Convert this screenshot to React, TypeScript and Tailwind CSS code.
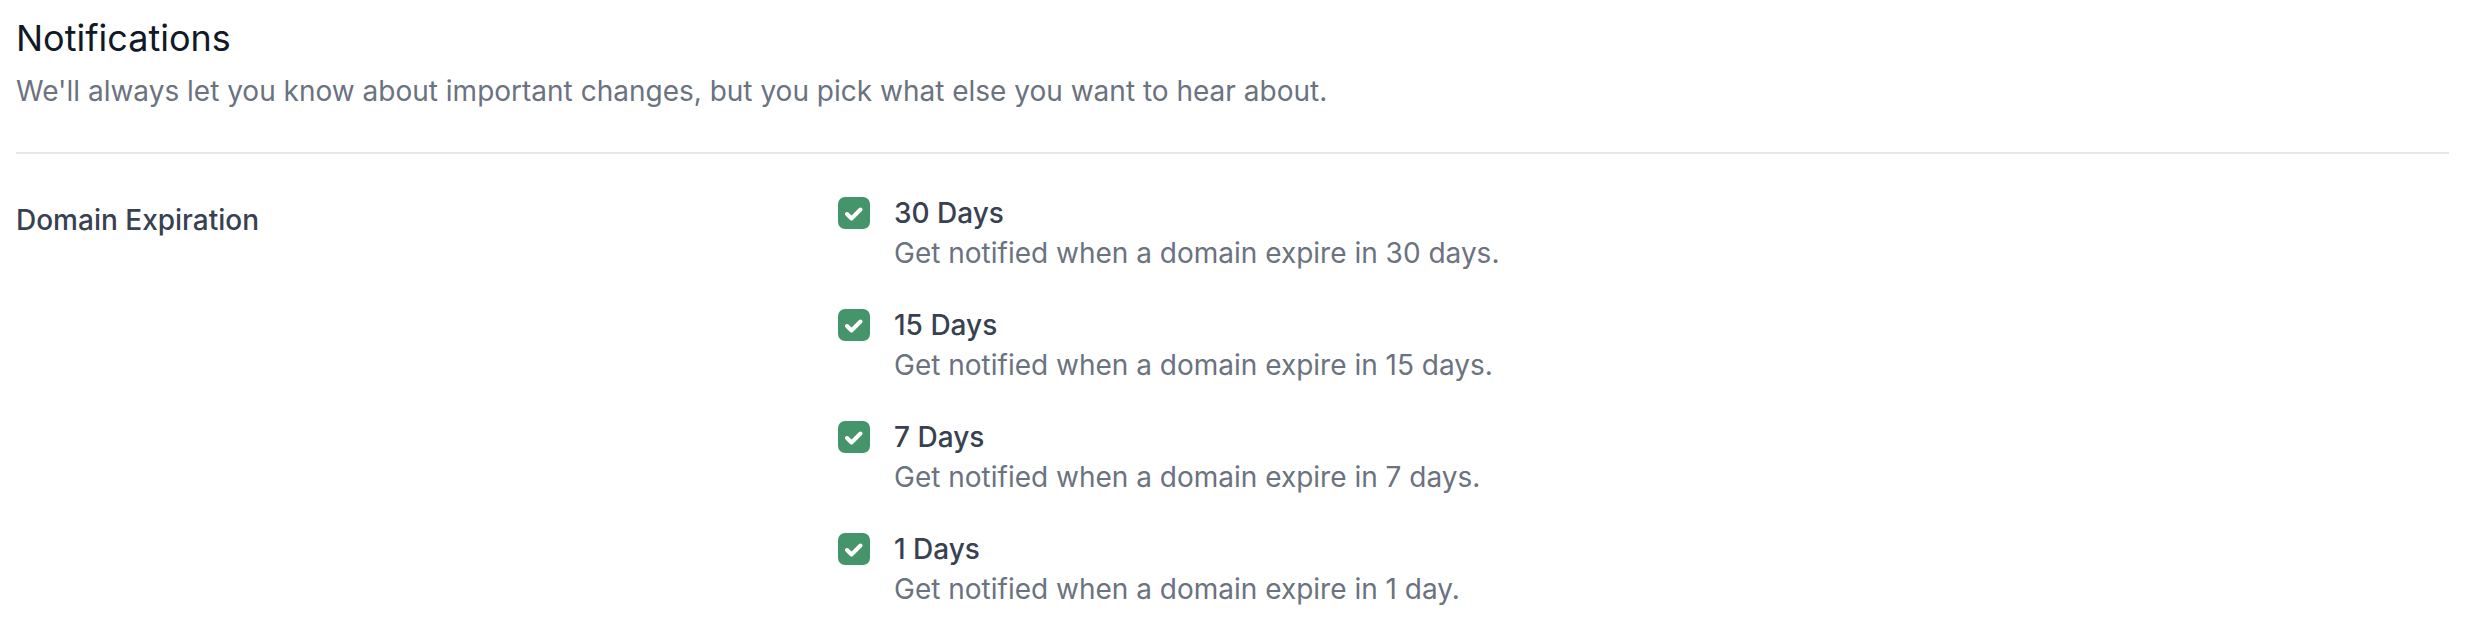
import React from 'react';

interface Option {
  label: string;
  description: string;
}

const options: Option[] = [
  { label: '30 Days', description: 'Get notified when a domain expire in 30 days.' },
  { label: '15 Days', description: 'Get notified when a domain expire in 15 days.' },
  { label: '7 Days', description: 'Get notified when a domain expire in 7 days.' },
  { label: '1 Days', description: 'Get notified when a domain expire in 1 day.' },
];

const CheckBox: React.FC = () => (
  <span className="mt-[4px] flex h-[32px] w-[32px] shrink-0 items-center justify-center rounded-[7px] bg-[#45956a]">
    <svg width="32" height="32" viewBox="0 0 32 32" fill="none">
      <polyline
        points="9,17 13.5,21.5 22.5,12.5"
        stroke="white"
        strokeWidth="4"
        strokeLinecap="round"
        strokeLinejoin="round"
      />
    </svg>
  </span>
);

const App: React.FC = () => {
  return (
    <div className="min-h-[640px] bg-white pl-[16px] pr-[21px] pt-[10px] font-['Inter',sans-serif]">
      <div className="pb-[41px]">
        <h1 className="text-[36px] leading-[56px] font-normal text-[#111827]">Notifications</h1>
        <p className="mt-[5px] text-[28px] leading-[40px] text-[#6b7280]">
          We'll always let you know about important changes, but you pick what else you want to hear about.
        </p>
      </div>

      <div className="grid grid-cols-[822px_1fr] border-t-2 border-[#e5e7eb] pt-[39px]">
        <div className="pt-[7px] text-[28px] leading-[40px] font-medium text-[#374151]">Domain Expiration</div>
        <div className="flex flex-col gap-[32px]">
          {options.map((opt) => (
            <label key={opt.label} className="flex items-start gap-[24px]">
              <CheckBox />
              <div>
                <div className="text-[28px] leading-[40px] font-medium text-[#374151]">{opt.label}</div>
                <div className="text-[28px] leading-[40px] text-[#6b7280]">{opt.description}</div>
              </div>
            </label>
          ))}
        </div>
      </div>
    </div>
  );
};

export default App;
